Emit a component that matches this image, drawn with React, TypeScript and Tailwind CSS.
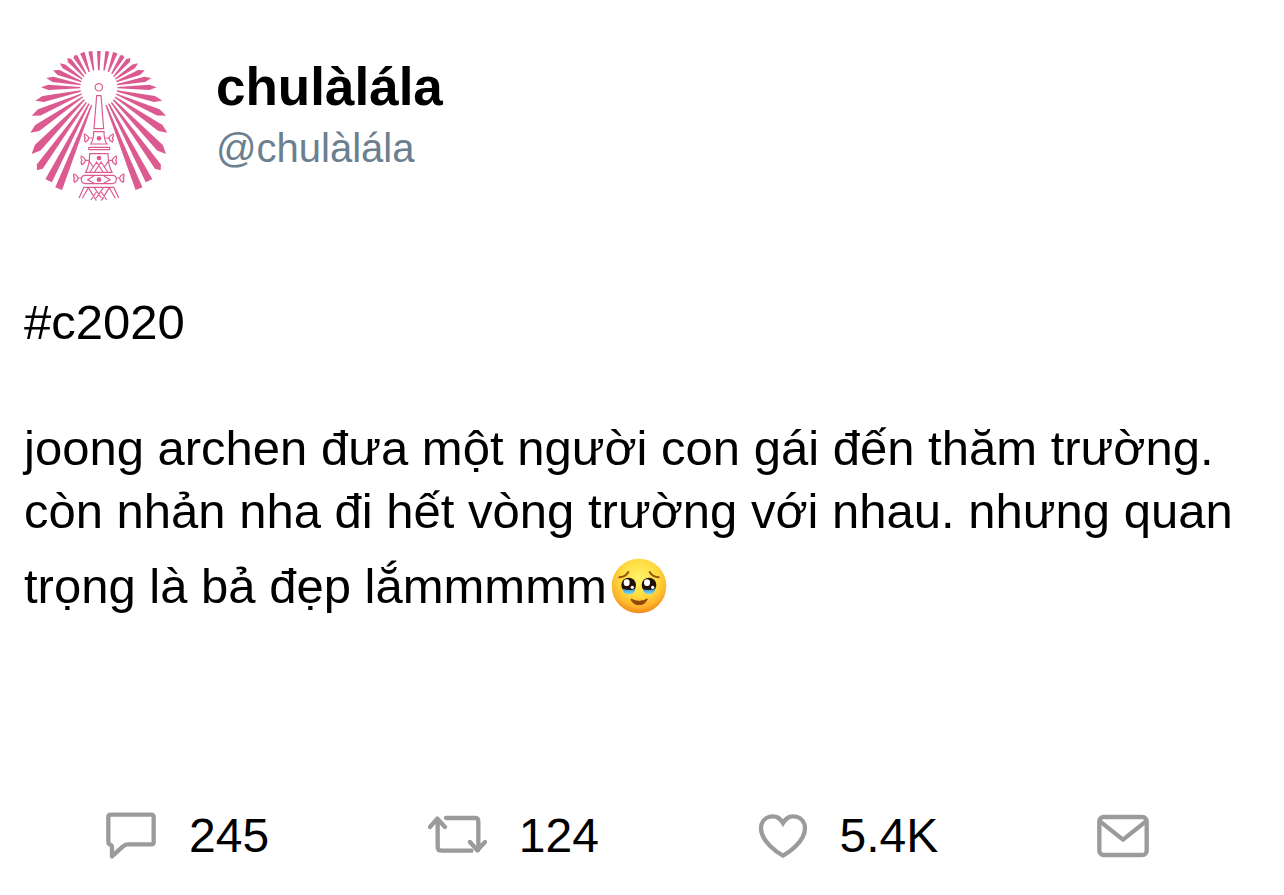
import React from 'react';

// tip x, tip y, inner x, inner y, half width, length of the point
const rays = [
    [211, 34, 221, 92, 6, 0],
    [187, 38, 208, 96, 7, 0],
    [164, 46, 198, 102, 7, 4],
    [142, 54, 192, 110, 7, 10],
    [119, 70, 187, 117, 7, 16],
    [99, 91, 184, 125, 8, 18],
    [79, 114, 182, 134, 8, 20],
    [63, 142, 181, 143, 8, 22],
    [46, 182, 182, 153, 9, 24],
    [35, 227, 185, 162, 10, 25],
    [31, 278, 188, 171, 11, 25],
    [35, 342, 193, 179, 12, 26],
    [51, 391, 199, 187, 11, 14],
    [86, 422, 207, 191, 11, 0],
    [116, 446, 215, 195, 11, 0],
];

const rayPoints = ([tx, ty, ix, iy, w, point]: number[]) => {
    const length = Math.hypot(tx - ix, ty - iy);
    const dx = (tx - ix) / length;
    const dy = (ty - iy) / length;
    const sx = tx - dx * point;
    const sy = ty - dy * point;
    return [
        [ix - dy * 2, iy + dx * 2],
        [sx - dy * w, sy + dx * w],
        [tx, ty],
        [sx + dy * w, sy - dx * w],
        [ix + dy * 2, iy - dx * 2],
    ].map((p) => p.join(',')).join(' ');
};

const HalfCrown: React.FC = () => (
    <>
        <g fill="#db5b91">
            {rays.map((ray) => (
                <polygon key={ray.join()} points={rayPoints(ray)} />
            ))}
        </g>
        {/* Side ornaments */}
        <g fill="none" stroke="#db5b91" strokeWidth="3.5">
            <path d="M217 294H205M194 282C203 287 206 291 206 294C206 299 202 303 196 306C192 300 193 297 196 294C193 291 191 287 194 282Z" />
            <path d="M206 361H195M184 348C193 353 196 357 196 361C196 366 192 371 186 374C182 368 183 364 186 361C183 357 181 353 184 348Z" />
            <path d="M184 414H173M162 402C171 407 174 411 174 414C174 419 170 424 164 427C160 421 161 417 164 414C161 411 159 407 162 402Z" />
        </g>
    </>
);

const Avatar: React.FC = () => (
    <svg viewBox="0 0 480 510" className="w-40 h-[170px] shrink-0" role="img" aria-label="chulàlála">
        <HalfCrown />
        <g transform="matrix(-1 0 0 1 473 0)">
            <HalfCrown />
        </g>
        <path d="M231 33H242L239 91H234Z" fill="#db5b91" />
        <g fill="none" stroke="#db5b91" strokeWidth="3.5">
            <circle cx="236.5" cy="142" r="11" />
            <path d="M230 167H243L251 266H222Z" />
            <path d="M221 275H252C252 290 255 304 261 312H212C218 304 221 290 221 275Z" />
            <rect x="206" y="322" width="63" height="7" rx="2" />
            <path d="M209 341H264C264 363 268 382 276 397H197C205 382 209 363 209 341Z" />
            <path d="M206 361L220 381L230 366L249 396M267 361L253 381L243 366L224 396M220 381L210 396M253 381L263 396" />
            <path d="M196 406H277C286 406 289 411 289 418C289 427 285 431 276 431H197C188 431 184 427 184 418C184 411 187 406 196 406Z" />
            <path d="M222 407L203 419L222 430M251 407L270 419L251 430" />
            <path d="M190 442H283M191 443L177 474M205 443L187 475M205 443L229 482M223 443L244 474M229 456L213 480M250 443L229 474M268 443L244 482M244 456L260 480M268 443L286 475M282 443L296 474" />
        </g>
        <g fill="#db5b91">
            <circle cx="237" cy="295" r="7" />
            <circle cx="237" cy="354" r="7" />
            <circle cx="237" cy="419" r="7" />
        </g>
    </svg>
);

const TearyFace: React.FC = () => (
    <svg viewBox="0 0 168 168" className="inline-block w-14 h-14 ml-1 mt-[15px] align-[-11px]" role="img" aria-label="🥹">
        <defs>
            <radialGradient id="face" cx="50%" cy="35%" r="66%">
                <stop offset="0" stopColor="#fff36b" />
                <stop offset="0.5" stopColor="#ffdc3f" />
                <stop offset="0.8" stopColor="#fdb52b" />
                <stop offset="1" stopColor="#ee8419" />
            </radialGradient>
            <linearGradient id="tear" x1="0" y1="0" x2="0" y2="1">
                <stop offset="0" stopColor="#2b8fd6" />
                <stop offset="1" stopColor="#7fe0fb" />
            </linearGradient>
        </defs>
        <circle cx="84" cy="84" r="82" fill="url(#face)" />
        <path d="M25 58Q43 57 52 42M143 58Q125 57 116 42" fill="none" stroke="#94510f" strokeWidth="6" strokeLinecap="round" />
        <circle cx="53" cy="81" r="22" fill="#201008" />
        <circle cx="114" cy="81" r="22" fill="#201008" />
        <path d="M34 92Q54 99 73 94Q69 109 54 109Q38 109 34 92ZM95 94Q114 99 133 92Q129 109 114 109Q99 109 95 94Z" fill="url(#tear)" />
        <g fill="#fff">
            <ellipse cx="47" cy="74" rx="9" ry="10" />
            <ellipse cx="108" cy="74" rx="9" ry="10" />
            <circle cx="64" cy="88" r="5" />
            <circle cx="125" cy="88" r="5" />
        </g>
        <path d="M60 123Q84 137 109 123Q103 140 84 140Q65 140 60 123Z" fill="#94450d" stroke="#94450d" strokeWidth="3" strokeLinejoin="round" />
    </svg>
);

const actionClass = 'flex items-center gap-8';

const App: React.FC = () => {
    return (
        <article className="bg-white text-black font-['Liberation_Sans',Arial,sans-serif]">
            {/* Author */}
            <header className="flex items-start gap-9 px-5 pt-10">
                <Avatar />
                <div className="pt-4">
                    <h1 className="text-[53px] leading-[62px] font-bold">chulàlála</h1>
                    <a href="#profile" className="block text-[40px] leading-[60px] text-[#6b7f8f]">@chulàlála</a>
                </div>
            </header>

            {/* Post */}
            <div className="px-6 pt-[81px] text-[49px] leading-[63px]">
                <p>#c2020</p>
                <p className="pt-[63px]">
                    joong archen đưa một người con gái đến thăm trường.<br />
                    còn nhản nha đi hết vòng trường với nhau. nhưng quan<br />
                    trọng là bả đẹp lắmmmmm<TearyFace />
                </p>
            </div>

            {/* Actions */}
            <footer className="flex items-center justify-between pl-[106px] pr-[135px] pt-[188px] pb-6 text-[48px] leading-[60px]">
                <button type="button" className={actionClass}>
                    <svg viewBox="0 0 153 144" className="w-[51px] h-12" fill="none" stroke="#9b9b9b" strokeWidth="13" strokeLinejoin="round" aria-hidden="true">
                        <path d="M14 8H136Q143 8 143 15V90Q143 97 136 97H65Q57 97 50 104L18 133V107Q18 100 13 98Q7 96 7 89V15Q7 8 14 8Z" />
                    </svg>
                    <span>245</span>
                </button>
                <button type="button" className={actionClass}>
                    <svg viewBox="0 0 177 144" className="w-[59px] h-12" fill="none" stroke="#9b9b9b" strokeWidth="13" strokeLinecap="round" strokeLinejoin="round" aria-hidden="true">
                        <path d="M54 18H141Q151 18 151 28V114M126 90L148 115L171 90M130 116H41Q29 116 29 104V22M6 45L28 20L51 45" />
                    </svg>
                    <span>124</span>
                </button>
                <button type="button" className={actionClass}>
                    <svg viewBox="0 0 150 144" className="w-[50px] h-12" fill="none" stroke="#9b9b9b" strokeWidth="13" aria-hidden="true">
                        <path d="M75 131C60 123 9 89 9 49C9 14 54 -3 75 33C96 -3 141 14 141 49C141 89 90 123 75 131Z" />
                    </svg>
                    <span>5.4K</span>
                </button>
                <button type="button" aria-label="Message">
                    <svg viewBox="0 0 156 132" className="w-[52px] h-11" fill="none" stroke="#9b9b9b" strokeWidth="13" strokeLinejoin="round" aria-hidden="true">
                        <rect x="7" y="9" width="142" height="114" rx="13" />
                        <path d="M10 23L78 77L146 23" />
                    </svg>
                </button>
            </footer>
        </article>
    );
};

export default App;
